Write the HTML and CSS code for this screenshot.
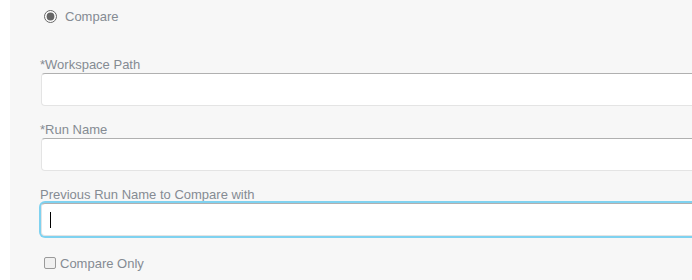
FILE: index.html
```html
<!DOCTYPE html>
<html>
<head>
<meta charset="utf-8">
<link rel="stylesheet" href="styles.css">
</head>
<body>
<div class="strip"></div>
<div class="panel">
  <label class="radio-row">
    <input type="radio" checked>
    <span>Compare</span>
  </label>
  <div class="group">
    <label class="lbl">*Workspace Path</label>
    <input class="field" type="text">
  </div>
  <div class="group">
    <label class="lbl">*Run Name</label>
    <input class="field" type="text">
  </div>
  <div class="group">
    <label class="lbl">Previous Run Name to Compare with</label>
    <div class="field focused"><span class="caret"></span></div>
  </div>
  <label class="check-row">
    <span class="box"></span>
    <span>Compare Only</span>
  </label>
</div>
</body>
</html>
```
FILE: styles.css
```css
html, body {
  margin: 0;
  height: 100%;
  background: #ffffff;
}
body {
  display: flex;
  font-family: "Liberation Sans", Arial, sans-serif;
  font-size: 13px;
  color: #858b93;
  overflow: hidden;
}
.strip {
  width: 10px;
  flex: none;
  background: #ffffff;
}
.panel {
  flex: 1;
  background: #f7f7f7;
  padding: 5px 0 0 30px;
  display: flex;
  flex-direction: column;
}
.radio-row {
  display: flex;
  align-items: center;
  gap: 8px;
  height: 18px;
  margin: 2px 0 31px 4px;
}
.radio-row input {
  margin: 0;
  width: 13px;
  height: 13px;
  accent-color: #666;
}
.group {
  display: flex;
  flex-direction: column;
  margin-bottom: 15px;
}
.lbl {
  display: block;
  line-height: 17px;
  margin-bottom: 0px;
}
.field {
  display: block;
  box-sizing: border-box;
  height: 33px;
  margin: 0 0 0 1px;
  width: calc(100% + 20px);
  background: #ffffff;
  border: 1px solid #e4e4e4;
  border-top-color: #b0b0b0;
  border-radius: 4px;
  outline: none;
  font: inherit;
  padding: 0 8px;
}
.focused {
  box-shadow: 0 0 0 2px #7fd2f0;
  display: flex;
  align-items: center;
}
.caret {
  display: block;
  width: 1px;
  height: 16px;
  background: #000;
}
.check-row {
  display: flex;
  align-items: center;
  gap: 4px;
  margin-top: 3px;
  margin-left: 4px;
  height: 18px;
}
.box {
  width: 10px;
  height: 10px;
  border: 1px solid #9a9a9a;
  border-radius: 2px;
  background: #f0f0f0;
}
```
